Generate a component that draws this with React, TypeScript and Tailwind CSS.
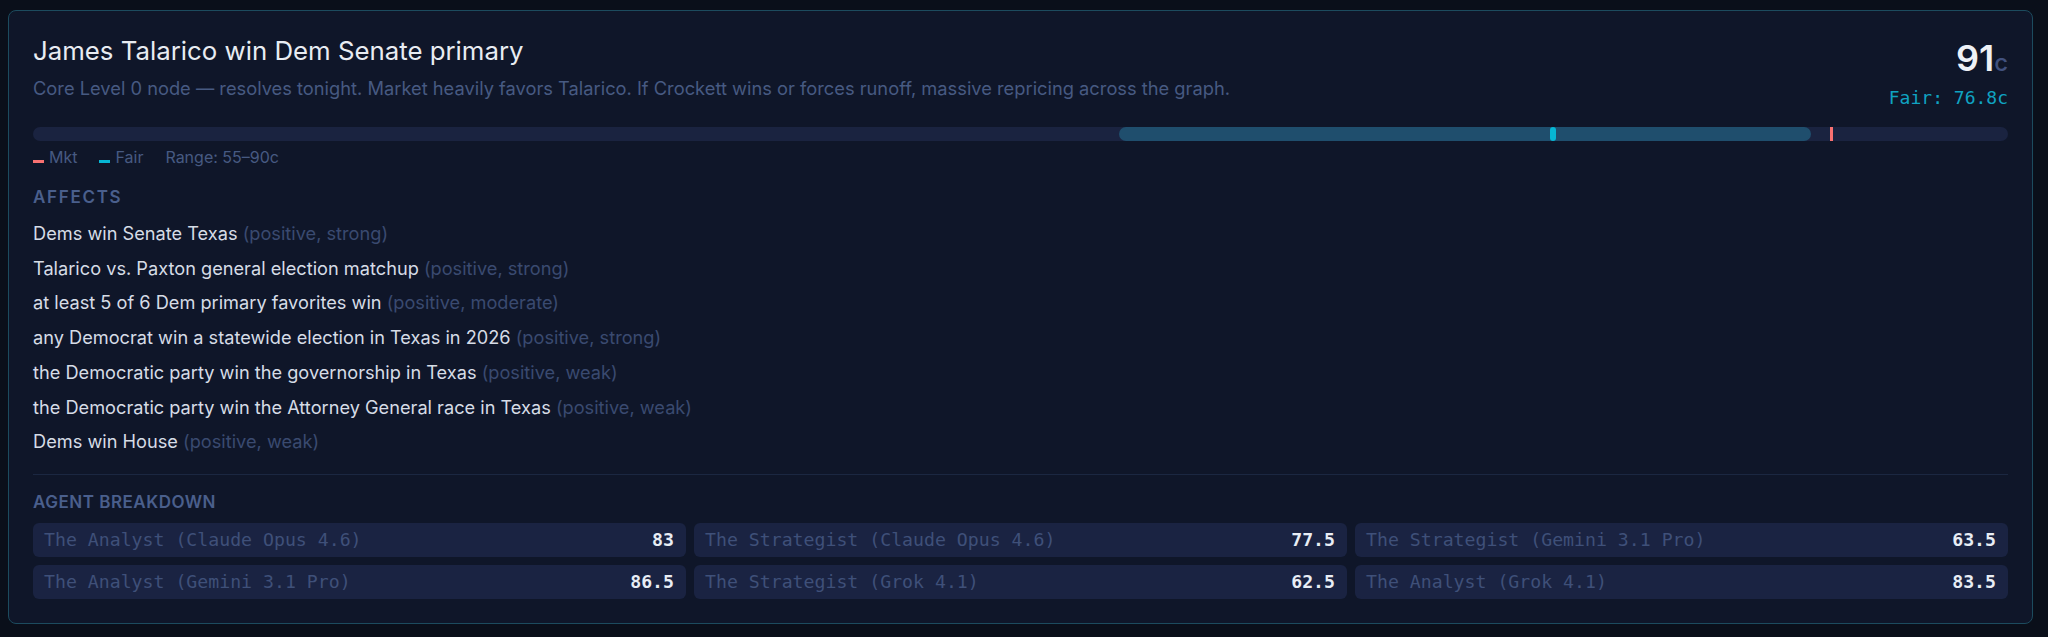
import React from "react";

const sans = { fontFamily: "Inter, 'Noto Sans', sans-serif" };

type Affect = { name: string; note: string };

const affects: Affect[] = [
  { name: "Dems win Senate Texas", note: "(positive, strong)" },
  { name: "Talarico vs. Paxton general election matchup", note: "(positive, strong)" },
  { name: "at least 5 of 6 Dem primary favorites win", note: "(positive, moderate)" },
  { name: "any Democrat win a statewide election in Texas in 2026", note: "(positive, strong)" },
  { name: "the Democratic party win the governorship in Texas", note: "(positive, weak)" },
  { name: "the Democratic party win the Attorney General race in Texas", note: "(positive, weak)" },
  { name: "Dems win House", note: "(positive, weak)" },
];

const agents = [
  { name: "The Analyst (Claude Opus 4.6)", value: "83" },
  { name: "The Strategist (Claude Opus 4.6)", value: "77.5" },
  { name: "The Strategist (Gemini 3.1 Pro)", value: "63.5" },
  { name: "The Analyst (Gemini 3.1 Pro)", value: "86.5" },
  { name: "The Strategist (Grok 4.1)", value: "62.5" },
  { name: "The Analyst (Grok 4.1)", value: "83.5" },
];

const range = { low: 55, high: 90 };
const fair = 76.8;
const market = 91;

function PriceBar() {
  return (
    <div className="relative mt-[17px] h-[14px] w-full rounded-full bg-[#1a2340]">
      <div
        className="absolute top-0 h-full rounded-full bg-[#1f4e6d]"
        style={{ left: `${range.low}%`, width: `${range.high - range.low}%` }}
      />
      <div
        className="absolute top-0 h-full w-[6px] rounded-full bg-[#06b6d4]"
        style={{ left: `${fair}%` }}
      />
      <div
        className="absolute top-0 h-full w-[3px] bg-[#f87171]"
        style={{ left: `${market}%` }}
      />
    </div>
  );
}

export default function App() {
  return (
    <div className="min-h-screen bg-[#0a0f1a] pl-2 pr-[15px] pt-[10px]" style={sans}>
      <div className="rounded-lg border border-[#1c4b5e] bg-[#0f1629] p-6">
        <div className="flex items-start justify-between">
          <div>
            <h2 className="text-[25.8px] leading-[32.5px] font-normal text-[#e8ecf2]">
              James Talarico win Dem Senate primary
            </h2>
            <p className="mt-2 text-[18.3px] leading-6 text-[#475a82]">
              Core Level 0 node — resolves tonight. Market heavily favors Talarico. If Crockett wins or forces runoff, massive repricing across the graph.
            </p>
          </div>
          <div className="text-right">
            <div className="text-[36px] leading-[46px] font-semibold text-[#eef1f6]">
              91<span className="text-[24px] leading-none font-medium text-[#41517e]">c</span>
            </div>
            <div className="mt-[5px] font-['DejaVu_Sans_Mono',monospace] text-[18px] leading-6 text-[#0fa3c2]">
              Fair: 76.8c
            </div>
          </div>
        </div>

        <PriceBar />

        <div className="mt-[4px] flex items-center gap-[22px] text-[16px] leading-6 text-[#475a82]">
          <span className="flex items-center gap-[5px]">
            <span className="mt-[8px] h-[3px] w-[11px] bg-[#f87171]" />
            Mkt
          </span>
          <span className="flex items-center gap-[5px]">
            <span className="mt-[8px] h-[3px] w-[11px] bg-[#06b6d4]" />
            Fair
          </span>
          <span>Range: 55–90c</span>
        </div>

        <h3 className="mt-4 text-[17px] leading-6 font-semibold tracking-[0.1em] text-[#4a5f8c]">AFFECTS</h3>
        <ul className="mt-[11px] flex flex-col gap-2">
          {affects.map((a) => (
            <li key={a.name} className="text-[18.2px] leading-[26.7px] text-[#d6dce6]">
              {a.name} <span className="text-[#3a4a70]">{a.note}</span>
            </li>
          ))}
        </ul>

        <div className="mt-[19px] border-t border-[#1b2741] pt-[15px]">
          <h3 className="text-[17px] leading-6 font-semibold tracking-[0.03em] text-[#4a5f8c]">AGENT BREAKDOWN</h3>
          <div className="mt-[9px] grid grid-cols-3 gap-2">
            {agents.map((g) => (
              <div
                key={g.name}
                className="flex h-[34px] items-center justify-between rounded-md bg-[#1a2342] pl-[11px] pr-3 font-['DejaVu_Sans_Mono',monospace] text-[18.2px]"
              >
                <span className="text-[#3f5079]">{g.name}</span>
                <span className="font-bold text-[#e8edf5]">{g.value}</span>
              </div>
            ))}
          </div>
        </div>
      </div>
    </div>
  );
}
